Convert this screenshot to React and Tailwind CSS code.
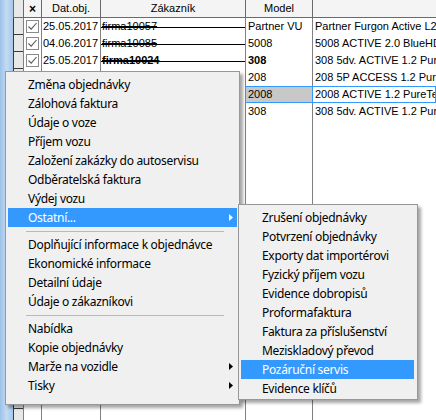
import React from "react";

const rows = [
  { c: true, d: "25.05.2017", z: "firma10057", m: "Partner VU", t: "Partner Furgon Active L2 1.6 BlueHDi" },
  { c: true, d: "04.06.2017", z: "firma10085", m: "5008", t: "5008 ACTIVE 2.0 BlueHDi 150" },
  { c: true, d: "25.05.2017", z: "firma10024", m: "308", t: "308 5dv. ACTIVE 1.2 PureTech", bold: true },
  { c: false, d: "", z: "", m: "208", t: "208 5P ACCESS 1.2 PureTech" },
  { c: false, d: "", z: "", m: "2008", t: "2008 ACTIVE 1.2 PureTech 82", sel: true },
  { c: false, d: "", z: "", m: "308", t: "308 5dv. ACTIVE 1.2 PureTech" },
];
while (rows.length < 24) rows.push({ c: false, d: "", z: "", m: "", t: "" });

function Check() {
  return (
    <div className="w-[13px] h-[13px] border border-[#8a8a8a] bg-white flex items-center justify-center">
      <svg width="11" height="11" viewBox="0 0 11 11">
        <path d="M1.5 5.5 L4.2 8.2 L9.5 2" fill="none" stroke="#5a5a5a" strokeWidth="1.1" />
      </svg>
    </div>
  );
}

function Arrow({ white }) {
  return (
    <svg width="4" height="7" viewBox="0 0 4 7" className="absolute right-[4px] top-[6px]">
      <path d="M0 0 L4 3.5 L0 7 Z" fill={white ? "#ffffff" : "#000000"} />
    </svg>
  );
}

function Item({ label, hl, arrow, pl = "pl-[20px]" }) {
  return (
    <div
      className={
        "relative h-[19px] flex items-center whitespace-nowrap " +
        pl +
        (hl ? " bg-[#3399ff] text-white" : " text-black")
      }
    >
      {label}
      {arrow && <Arrow white={hl} />}
    </div>
  );
}

function Sep() {
  return (
    <div className="h-[8px] flex items-center ml-[18px] mr-[13px]">
      <div className="h-px w-full bg-[#b9b9b9]" />
    </div>
  );
}

export default function App() {
  const font = { fontFamily: '"Liberation Sans", Arial, sans-serif' };
  const menuFont = { fontFamily: '"Noto Sans", "Open Sans", sans-serif' };
  return (
    <div className="relative w-[436px] h-[420px] overflow-hidden bg-white flex" style={font}>
      <div className="w-[13px] h-full shrink-0 bg-gradient-to-r from-[#9cc2e8] via-[#c3dbf2] to-[#a6c8ea]" />
      <div className="flex-1 min-w-0 flex flex-col text-[11px] text-black">
        {/* header */}
        <div className="flex h-[18px] bg-[#f4f4f4] border-b border-[#6a6a6a] shrink-0">
          <div className="w-[10px] shrink-0 border-l border-[#6a6a6a] bg-[#e8e8e8]" />
          <div className="w-[18px] shrink-0 border-l border-[#6a6a6a] flex items-center justify-center font-bold text-[12px]">×</div>
          <div className="w-[59px] shrink-0 border-l border-[#6a6a6a] flex items-center justify-center">Dat.obj.</div>
          <div className="w-[145px] shrink-0 border-l border-[#6a6a6a] flex items-center justify-center">Zákazník</div>
          <div className="w-[67px] shrink-0 border-l border-[#6a6a6a] flex items-center justify-center">Model</div>
          <div className="flex-1 min-w-0 border-l border-[#6a6a6a]" />
        </div>
        {rows.map((r, i) => (
          <div key={i} className="flex h-[17px] shrink-0">
            <div className="w-[10px] shrink-0 border-l border-b border-[#3a3a3a] bg-[#e8e8e8]" />
            <div className="w-[18px] shrink-0 border-l border-[#808080] flex items-center justify-center">
              {r.c && <Check />}
            </div>
            <div className="w-[59px] shrink-0 border-l border-[#808080] flex items-center pl-[1px] whitespace-nowrap">{r.d}</div>
            <div className={"relative w-[145px] shrink-0 border-l border-[#808080] flex items-center pl-[1px] whitespace-nowrap " + (r.bold ? "font-bold" : "")}>
              {r.z && (
                <>
                  <span className="line-through">{r.z}</span>
                  <div className="absolute left-0 right-0 top-[9px] h-px bg-black" />
                </>
              )}
            </div>
            <div
              className={
                "w-[67px] shrink-0 border-l flex items-center pl-[2px] whitespace-nowrap " +
                (r.sel ? "bg-[#c8c8c8] border-y border-[#3399ff]" : "border-[#808080]") +
                (r.bold ? " font-bold" : "")
              }
            >
              {r.m}
            </div>
            <div
              className={
                "flex-1 min-w-0 border-l flex items-center pl-[2px] whitespace-nowrap overflow-hidden " +
                (r.sel ? "border border-[#3399ff]" : "border-[#808080]")
              }
            >
              {r.t}
            </div>
          </div>
        ))}
      </div>

      {/* main context menu */}
      <div
        className="absolute left-[5px] top-[71px] w-[235px] h-[334px] bg-[#f0f0f0] border border-[#979797] shadow-[3px_3px_3px_rgba(0,0,0,0.35)] pt-[3px] px-[2px] text-[12px] tracking-[-0.3px]"
        style={menuFont}
      >
        <Item label="Změna objednávky" />
        <Item label="Zálohová faktura" />
        <Item label="Údaje o voze" />
        <Item label="Příjem vozu" />
        <Item label="Založení zakázky do autoservisu" />
        <Item label="Odběratelská faktura" />
        <Item label="Výdej vozu" />
        <Item label="Ostatní..." hl arrow />
        <Sep />
        <Item label="Doplňující informace k objednávce" />
        <Item label="Ekonomické informace" />
        <Item label="Detailní údaje" />
        <Item label="Údaje o zákazníkovi" />
        <Sep />
        <Item label="Nabídka" />
        <Item label="Kopie objednávky" />
        <Item label="Marže na vozidle" arrow />
        <Item label="Tisky" arrow />
      </div>

      {/* submenu */}
      <div
        className="absolute left-[238px] top-[204px] w-[180px] h-[196px] bg-[#f0f0f0] border border-[#979797] shadow-[3px_3px_3px_rgba(0,0,0,0.35)] pt-[3px] pl-[2px] pr-[3px] text-[12px] tracking-[-0.3px]"
        style={menuFont}
      >
        <Item label="Zrušení objednávky" pl="pl-[21px]" />
        <Item label="Potvrzení objednávky" pl="pl-[21px]" />
        <Item label="Exporty dat importérovi" pl="pl-[21px]" />
        <Item label="Fyzický příjem vozu" pl="pl-[21px]" />
        <Item label="Evidence dobropisů" pl="pl-[21px]" />
        <Item label="Proformafaktura" pl="pl-[21px]" />
        <Item label="Faktura za příslušenství" pl="pl-[21px]" />
        <Item label="Meziskladový převod" pl="pl-[21px]" />
        <Item label="Pozáruční servis" hl pl="pl-[21px]" />
        <Item label="Evidence klíčů" pl="pl-[21px]" />
      </div>
    </div>
  );
}
